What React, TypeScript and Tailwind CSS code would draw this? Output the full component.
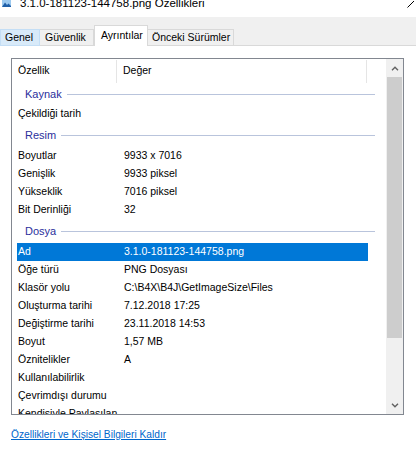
import React from 'react';

type Row = { label: string; value?: string; selected?: boolean };
type Group = { title: string; rows: Row[]; first?: boolean };

const groups: Group[] = [
  { title: 'Kaynak', first: true, rows: [{ label: 'Çekildiği tarih' }] },
  {
    title: 'Resim',
    rows: [
      { label: 'Boyutlar', value: '9933 x 7016' },
      { label: 'Genişlik', value: '9933 piksel' },
      { label: 'Yükseklik', value: '7016 piksel' },
      { label: 'Bit Derinliği', value: '32' },
    ],
  },
  {
    title: 'Dosya',
    rows: [
      { label: 'Ad', value: '3.1.0-181123-144758.png', selected: true },
      { label: 'Öğe türü', value: 'PNG Dosyası' },
      { label: 'Klasör yolu', value: 'C:\\B4X\\B4J\\GetImageSize\\Files' },
      { label: 'Oluşturma tarihi', value: '7.12.2018 17:25' },
      { label: 'Değiştirme tarihi', value: '23.11.2018 14:53' },
      { label: 'Boyut', value: '1,57 MB' },
      { label: 'Öznitelikler', value: 'A' },
      { label: 'Kullanılabilirlik' },
      { label: 'Çevrimdışı durumu' },
      { label: 'Kendisiyle Paylaşılan' },
    ],
  },
];

const Chevron = ({ up }: { up?: boolean }) => (
  <svg width="8" height="5" viewBox="0 0 8 5">
    <path
      d={up ? 'M1 4.2 L4 1.2 L7 4.2' : 'M1 0.8 L4 3.8 L7 0.8'}
      fill="none"
      stroke="#606060"
      strokeWidth="1.4"
    />
  </svg>
);

const DataRow = ({ row }: { row: Row }) => (
  <div
    className={`ml-[5px] w-[351px] h-[18px] shrink-0 flex items-center ${
      row.selected ? 'bg-[#0078d7] text-white' : ''
    }`}
  >
    <span className="w-[107px] pl-[1px] whitespace-nowrap">{row.label}</span>
    <span className="whitespace-nowrap">{row.value}</span>
  </div>
);

export default function App() {
  return (
    <div className="w-[416px] h-[453px] bg-white overflow-hidden font-['Liberation_Sans',Arial,sans-serif] text-[10.5px] text-black">
      {/* title bar */}
      <div className="h-[17px] flex items-start justify-between overflow-hidden">
        <div className="flex items-start gap-[9px]">
          <svg width="9" height="7" viewBox="0 0 9 7" className="ml-[2px] mt-0">
            <rect x="0" y="0" width="9" height="7" fill="#9cc9ef" />
            <path d="M0 7 L3 2.5 L5 5 L6.5 3.5 L9 6 L9 7 Z" fill="#1f5fa8" />
          </svg>
          <div className="-mt-[3px] text-[11.5px] leading-[12px] whitespace-nowrap">
            3.1.0-181123-144758.png Özellikleri
          </div>
        </div>
        <svg width="8" height="8" viewBox="0 0 8 8" className="mr-[1px]">
          <path d="M0.5 7.5 L7 1" stroke="#000" strokeWidth="1" fill="none" />
        </svg>
      </div>

      {/* tabs */}
      <div className="h-[29px] bg-[#f0f0f0] border-b border-[#d9d9d9] flex items-end">
        <div className="-mb-px w-[40px] h-[17px] bg-[#d8eaf9] border border-[#c4def5] flex items-center pl-[4px] leading-none">
          Genel
        </div>
        <div className="-mb-px w-[54px] h-[17px] border border-l-0 border-[#d9d9d9] flex items-center pl-[5px] leading-none">
          Güvenlik
        </div>
        <div className="-mb-px w-[54px] h-[21px] bg-white border border-b-0 border-[#d9d9d9] flex items-center pl-[6px] pb-[2px] leading-none">
          Ayrıntılar
        </div>
        <div className="-mb-px w-[86px] h-[17px] border border-l-0 border-[#d9d9d9] flex items-center pl-[4px] leading-none">
          Önceki Sürümler
        </div>
      </div>

      {/* content */}
      <div className="px-[11px] pt-[12px]">
        <div className="w-[393px] h-[357px] border border-[#828790] flex overflow-hidden">
          <div className="flex-1 flex flex-col overflow-hidden">
            {/* header */}
            <div className="h-[24px] shrink-0 flex items-center">
              <div className="w-[105px] h-[23px] pl-[6px] flex items-center border-r border-[#e5e5e5]">Özellik</div>
              <div className="w-[250px] h-[23px] pl-[6px] flex items-center border-r border-[#e5e5e5]">Değer</div>
            </div>
            {groups.map((g) => (
              <React.Fragment key={g.title}>
                <div
                  className={`${g.first ? 'h-[22px]' : 'h-[24px]'} shrink-0 ml-[5px] w-[358px] flex items-center pl-[8px] text-[#2a2f9c]`}
                >
                  <span className="whitespace-nowrap text-[11px]">{g.title}</span>
                  <div className="flex-1 ml-[5px] h-px bg-[#b9c4dc]" />
                </div>
                {g.rows.map((r) => (
                  <DataRow key={r.label} row={r} />
                ))}
              </React.Fragment>
            ))}
          </div>
          {/* scrollbar */}
          <div className="w-[17px] shrink-0 bg-[#f0f0f0] flex flex-col">
            <div className="h-[18px] flex items-center justify-center">
              <Chevron up />
            </div>
            <div className="h-[261px] w-[15px] mx-auto bg-[#cdcdcd]" />
            <div className="flex-1" />
            <div className="h-[18px] flex items-center justify-center">
              <Chevron />
            </div>
          </div>
        </div>
        <div className="mt-[12px] leading-[14px]">
          <a href="#" className="text-[#0066cc] underline whitespace-nowrap text-[10.2px]">
            Özellikleri ve Kişisel Bilgileri Kaldır
          </a>
        </div>
      </div>
    </div>
  );
}
